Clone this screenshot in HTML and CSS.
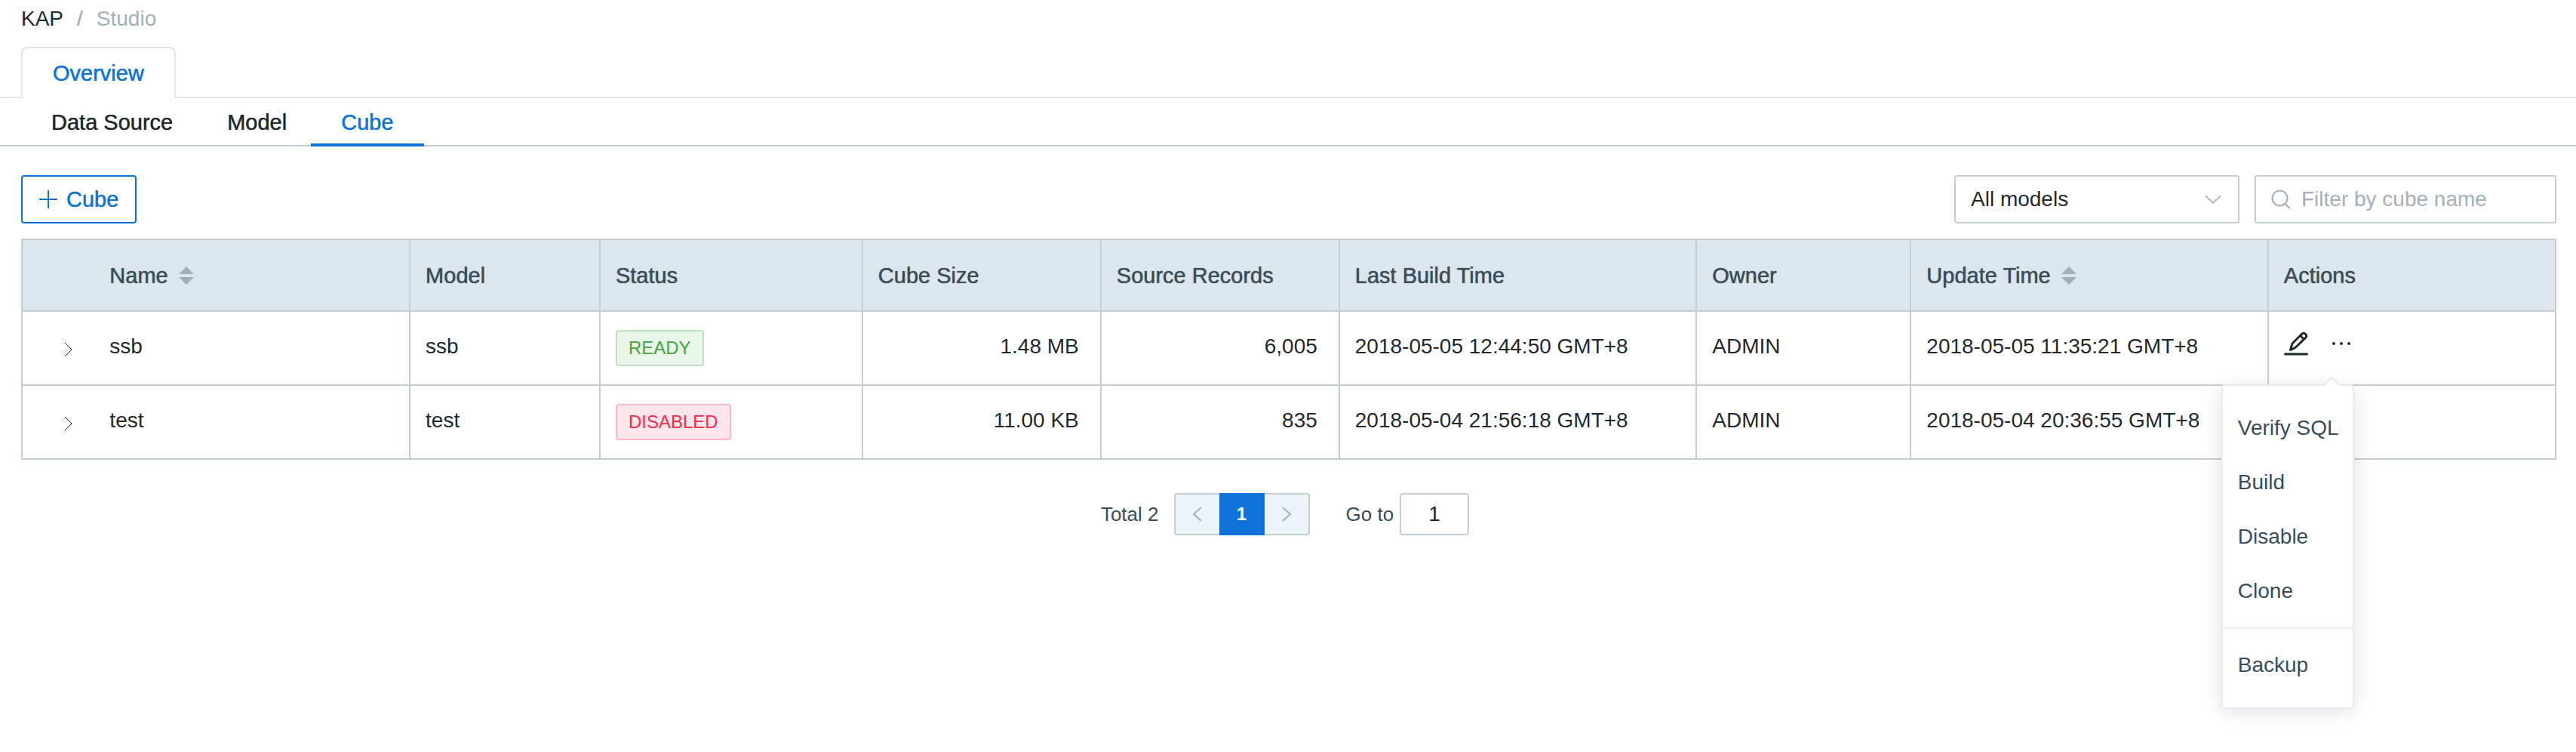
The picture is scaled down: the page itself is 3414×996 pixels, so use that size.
FILE: index.html
```html
<!DOCTYPE html>
<html lang="en">
<head>
<meta charset="utf-8">
<meta name="viewport" content="width=device-width, initial-scale=1">
<title>KAP Studio</title>
<link rel="stylesheet" href="styles.css">
</head>
<body>
<nav class="breadcrumb" aria-label="Breadcrumb">
  <a class="crumb" href="#">KAP</a>
  <span class="crumb-separator">/</span>
  <span class="crumb-current">Studio</span>
</nav>

<div class="card-tabs" role="tablist">
  <button class="card-tab" type="button" role="tab" aria-selected="true">Overview</button>
</div>

<div class="line-tabs" role="tablist">
  <button class="line-tab" type="button" role="tab">Data Source</button>
  <button class="line-tab" type="button" role="tab">Model</button>
  <button class="line-tab line-tab-active" type="button" role="tab" aria-selected="true">Cube</button>
</div>

<main class="content">
  <div class="toolbar">
    <button class="add-button" type="button">
      <svg class="icon-plus" viewBox="0 0 24 24" aria-hidden="true"><path d="M12 0v24M0 12h24"/></svg>
      <span>Cube</span>
    </button>
    <div class="filters">
      <div class="select-box">
        <select class="select" aria-label="Model">
          <option>All models</option>
        </select>
        <svg class="icon-down" viewBox="0 0 24 12" aria-hidden="true"><path d="M1 1l11 10L23 1"/></svg>
      </div>
      <label class="search-box">
        <svg class="icon-search" viewBox="0 0 26 26" aria-hidden="true"><circle cx="11.500" cy="11.500" r="10"/><path d="M18.500 19l6 6"/></svg>
        <input class="search" type="text" placeholder="Filter by cube name" aria-label="Filter by cube name">
      </label>
    </div>
  </div>

  <table class="cube-table">
    <colgroup>
      <col class="col-expand"><col class="col-name"><col class="col-model"><col class="col-status"><col class="col-size">
      <col class="col-size"><col class="col-time"><col class="col-owner"><col class="col-time"><col class="col-actions">
    </colgroup>
    <thead>
      <tr>
        <th class="expand-cell"></th>
        <th class="name-cell"><span class="sortable">Name <svg class="icon-sort" viewBox="0 0 20 24" aria-hidden="true"><path d="M10 0l10 10H0zM0 14h20L10 24z"/></svg></span></th>
        <th>Model</th>
        <th>Status</th>
        <th>Cube Size</th>
        <th>Source Records</th>
        <th>Last Build Time</th>
        <th>Owner</th>
        <th><span class="sortable">Update Time <svg class="icon-sort" viewBox="0 0 20 24" aria-hidden="true"><path d="M10 0l10 10H0zM0 14h20L10 24z"/></svg></span></th>
        <th>Actions</th>
      </tr>
    </thead>
    <tbody>
      <tr>
        <td class="expand-cell"><button class="expand" type="button" aria-label="Expand ssb"><svg class="icon-right" viewBox="0 0 12 20" aria-hidden="true"><path d="M1 1l9 9-9 9"/></svg></button></td>
        <td class="name-cell">ssb</td>
        <td>ssb</td>
        <td class="tag-cell"><span class="tag tag-ready">READY</span></td>
        <td class="number">1.48 MB</td>
        <td class="number">6,005</td>
        <td>2018-05-05 12:44:50 GMT+8</td>
        <td>ADMIN</td>
        <td>2018-05-05 11:35:21 GMT+8</td>
        <td>
          <div class="actions">
            <button class="icon-button" type="button" aria-label="Edit">
              <svg class="icon-edit" viewBox="0 0 32 32" aria-hidden="true"><path d="M1.500 30h29"/><path d="M8.500 24.500l2.500-8.500L23.500 3.500c1.500-1.500 3.500-1.500 5 0s1.500 3.500 0 5L16 20.500c-2 2-5 3-7.500 4z"/><path d="M22.500 5.500c.5 2 2 3.500 4 4"/></svg>
            </button>
            <div class="more">
              <button class="icon-button" type="button" aria-label="More actions" aria-expanded="true">
                <svg class="icon-more" viewBox="0 0 26 32" aria-hidden="true"><circle cx="3" cy="16" r="2"/><circle cx="13" cy="16" r="2"/><circle cx="23" cy="16" r="2"/></svg>
              </button>
              <div class="menu" role="menu">
                <svg class="menu-arrow" viewBox="0 0 24 12" aria-hidden="true"><path class="arrow-fill" d="M2 12L12 2l10 10z"/><path class="arrow-line" d="M1 11L12 1l11 10"/></svg>
                <button class="menu-item" type="button" role="menuitem">Verify SQL</button>
                <button class="menu-item" type="button" role="menuitem">Build</button>
                <button class="menu-item" type="button" role="menuitem">Disable</button>
                <button class="menu-item" type="button" role="menuitem">Clone</button>
                <hr class="menu-divider">
                <button class="menu-item" type="button" role="menuitem">Backup</button>
              </div>
            </div>
          </div>
        </td>
      </tr>
      <tr>
        <td class="expand-cell"><button class="expand" type="button" aria-label="Expand test"><svg class="icon-right" viewBox="0 0 12 20" aria-hidden="true"><path d="M1 1l9 9-9 9"/></svg></button></td>
        <td class="name-cell">test</td>
        <td>test</td>
        <td class="tag-cell"><span class="tag tag-disabled">DISABLED</span></td>
        <td class="number">11.00 KB</td>
        <td class="number">835</td>
        <td>2018-05-04 21:56:18 GMT+8</td>
        <td>ADMIN</td>
        <td>2018-05-04 20:36:55 GMT+8</td>
        <td></td>
      </tr>
    </tbody>
  </table>

  <div class="pagination">
    <span class="total">Total 2</span>
    <div class="pager">
      <button class="page page-prev" type="button" aria-label="Previous page"><svg class="icon-page" viewBox="0 0 12 20" aria-hidden="true"><path d="M11 1l-10 9 10 9"/></svg></button>
      <button class="page page-active" type="button">1</button>
      <button class="page page-next" type="button" aria-label="Next page"><svg class="icon-page" viewBox="0 0 12 20" aria-hidden="true"><path d="M1 1l10 9-10 9"/></svg></button>
    </div>
    <label class="jump">Go to <input class="jump-input" type="text" value="1"></label>
  </div>
</main>
</body>
</html>
```

FILE: styles.css
```css
* {
  box-sizing: border-box;
}

body {
  min-height: 100vh;
  margin: 0;
  background: #fff;
  color: #1f292e;
  font-family: "Liberation Sans", Arial, sans-serif;
  font-size: 28px;
  line-height: 36px;
}

button,
input,
select {
  margin: 0;
  padding: 0;
  border: 0;
  background: none;
  color: inherit;
  font: inherit;
}

svg {
  display: block;
  flex: none;
  fill: none;
  stroke: currentColor;
}

/* Breadcrumb */
.breadcrumb {
  display: flex;
  gap: 18px;
  padding: 0 28px;
  line-height: 50px;
}

.crumb {
  color: #1f292e;
  text-decoration: none;
}

.crumb-separator,
.crumb-current {
  color: #a2b0b9;
}

.crumb-separator {
  text-shadow: 0 0 1px #a2b0b9;
}

/* Tabs */
.card-tabs {
  display: flex;
  margin-top: 12px;
  padding: 0 28px;
  border-bottom: 2px solid #dfe3eb;
}

.card-tab {
  margin-bottom: -2px;
  padding: 0 40px;
  border: 2px solid #dfe3eb;
  border-bottom: 0;
  border-radius: 8px 8px 0 0;
  background: #fff;
  color: #0f72d8;
  font-size: 29px;
  line-height: 66px;
  text-shadow: 0 0 1px #0f72d8;
}

.line-tabs {
  display: flex;
  gap: 72px;
  height: 64px;
  padding: 0 68px;
  border-bottom: 2px solid #c3ced2;
}

.line-tab {
  position: relative;
  font-size: 29px;
  line-height: 64px;
  height: 64px;
  text-shadow: 0 0 1px currentColor;
}

.line-tab-active {
  color: #0f72d8;
}

.line-tab-active::after {
  content: "";
  position: absolute;
  right: -40px;
  bottom: 0;
  left: -40px;
  height: 4px;
  background: #0f72d8;
}

/* Toolbar */
.content {
  padding: 38px 26px 56px 28px;
}

.toolbar {
  display: flex;
  justify-content: space-between;
  margin-bottom: 20px;
}

.add-button {
  display: flex;
  align-items: center;
  gap: 12px;
  height: 64px;
  padding: 0 22px;
  border: 2px solid #0f72d8;
  border-radius: 4px;
  color: #0f72d8;
  font-size: 29px;
  text-shadow: 0 0 1px #0f72d8;
}

.icon-plus {
  width: 24px;
  height: 24px;
  stroke-width: 2;
}

.filters {
  display: flex;
  gap: 20px;
}

.select-box,
.search-box {
  display: flex;
  align-items: center;
  height: 64px;
  border: 2px solid #c3ced2;
  border-radius: 4px;
}

.select-box {
  display: grid;
  width: 378px;
}

.select {
  grid-area: 1 / 1;
  width: 100%;
  height: 60px;
  padding: 0 60px 0 20px;
  appearance: none;
}

.icon-down {
  grid-area: 1 / 1;
  justify-self: end;
  width: 22px;
  height: 12px;
  margin-right: 22px;
  color: #a2b0b9;
  stroke-width: 2;
  pointer-events: none;
}

.search-box {
  gap: 14px;
  width: 400px;
  padding: 0 20px;
}

.icon-search {
  width: 26px;
  height: 26px;
  color: #a2b0b9;
  stroke-width: 2;
}

.search {
  flex: 1;
  min-width: 0;
  height: 60px;
  outline: 0;
}

.search::placeholder {
  color: #a2b0b9;
  opacity: 1;
}

/* Table */
.cube-table {
  width: 100%;
  border-collapse: collapse;
  table-layout: fixed;
}

.col-expand { width: 2.87%; }
.col-name { width: 12.44%; }
.col-model { width: 7.5%; }
.col-status { width: 10.36%; }
.col-size { width: 9.41%; }
.col-time { width: 14.1%; }
.col-owner { width: 8.46%; }
.col-actions { width: 11.35%; }

.cube-table th,
.cube-table td {
  padding: 0 20px;
  border: 2px solid #c3ced2;
  text-align: left;
  white-space: nowrap;
}

.cube-table th {
  height: 95px;
  background: #dce6ec;
  color: #3a4c57;
  font-size: 29px;
  font-weight: 400;
  text-shadow: 0 0 1px #3a4c57;
}

.cube-table td {
  height: 98px;
  padding-bottom: 4px;
}

.cube-table .expand-cell {
  padding: 0;
  border-right: 0;
}

.cube-table .name-cell {
  border-left: 0;
}

.cube-table .tag-cell {
  padding-bottom: 0;
}

.cube-table .number {
  padding-right: 28px;
  text-align: right;
}

.sortable {
  display: flex;
  align-items: center;
  gap: 14px;
}

.icon-sort {
  width: 20px;
  height: 24px;
  fill: #a2b0b9;
  stroke: none;
}

.expand {
  display: grid;
  width: 36px;
  height: 36px;
  margin: 4px auto 0 43px;
  place-items: center;
  color: #1f292e;
}

.icon-right {
  width: 12px;
  height: 20px;
  stroke-width: 1;
}

.tag {
  display: block;
  width: fit-content;
  padding: 0 15px;
  border: 2px solid;
  border-radius: 4px;
  font-size: 24px;
  line-height: 44px;
}

.tag-ready {
  border-color: #bde3be;
  background: #e9f5e9;
  color: #43a440;
}

.tag-disabled {
  border-color: #ffb8c3;
  background: #ffe6ea;
  color: #fb2a4b;
}

.actions {
  display: flex;
  gap: 31px;
  margin-bottom: 8px;
}

.icon-button {
  display: block;
}

.icon-edit {
  width: 32px;
  height: 32px;
  stroke-width: 3;
  stroke-linecap: round;
  stroke-linejoin: round;
}

.icon-more {
  width: 26px;
  height: 32px;
  fill: currentColor;
  stroke: none;
}

/* Actions menu */
.more {
  position: relative;
}

.menu {
  position: absolute;
  top: 70px;
  right: -4px;
  z-index: 1;
  width: 176px;
  padding: 20px 0;
  border: 2px solid #e4e9f3;
  border-radius: 4px;
  background: #fff;
  box-shadow: 0 4px 24px rgba(0, 0, 0, 0.12);
}

.menu-arrow {
  position: absolute;
  top: -12px;
  right: 16px;
  width: 24px;
  height: 12px;
}

.arrow-fill {
  fill: #fff;
  stroke: none;
}

.arrow-line {
  stroke: #e4e9f3;
  stroke-width: 2;
}

.menu-item {
  display: block;
  width: 100%;
  padding: 0 20px;
  color: #3a4c57;
  line-height: 72px;
  text-align: left;
  white-space: nowrap;
}

.menu-divider {
  height: 2px;
  margin: 12px 0;
  border: 0;
  background: #e4e9f3;
}

/* Pagination */
.pagination {
  display: flex;
  align-items: center;
  justify-content: center;
  margin-top: 44px;
  padding-right: 10px;
  color: #3a4c57;
  font-size: 26px;
}

.total {
  margin-right: 20px;
}

.pager {
  display: flex;
}

.page {
  display: grid;
  width: 60px;
  height: 56px;
  place-items: center;
  border: 2px solid #c3ced2;
  background: #ecf4f8;
  color: #a2b0b9;
}

.page-prev {
  border-right: 0;
  border-radius: 4px 0 0 4px;
}

.page-next {
  border-left: 0;
  border-radius: 0 4px 4px 0;
}

.page-active {
  border-color: #0f72d8;
  background: #0f72d8;
  color: #fff;
  font-size: 24px;
  font-weight: 700;
}

.icon-page {
  width: 12px;
  height: 20px;
  stroke-width: 2;
}

.jump {
  display: flex;
  align-items: center;
  gap: 8px;
  margin-left: 48px;
}

.jump-input {
  width: 92px;
  height: 56px;
  border: 2px solid #c3ced2;
  border-radius: 4px;
  color: #1f292e;
  font-size: 28px;
  text-align: center;
}
```
